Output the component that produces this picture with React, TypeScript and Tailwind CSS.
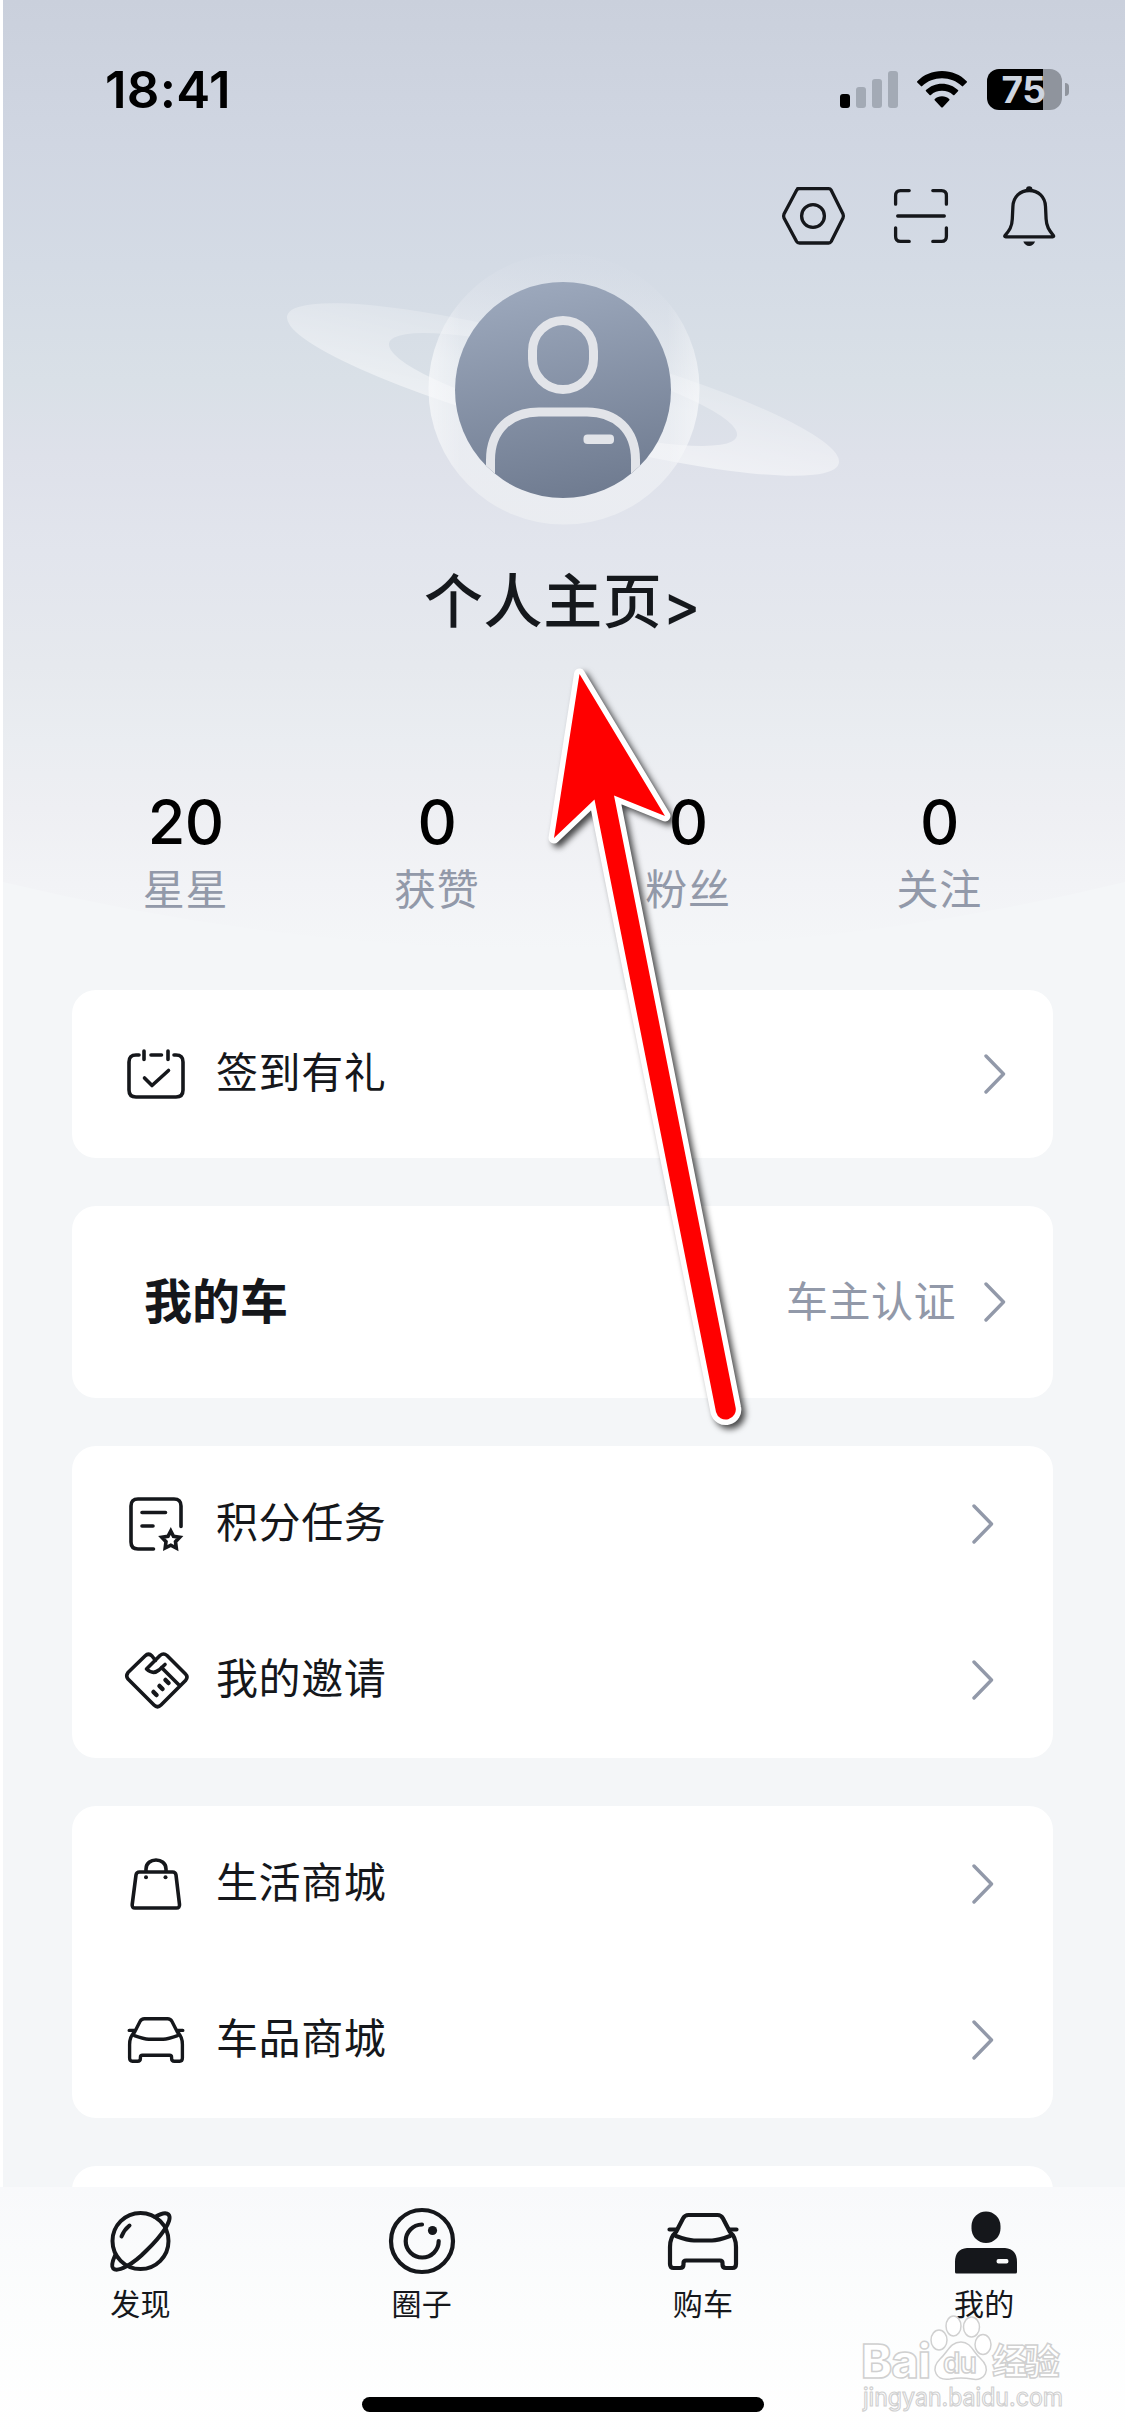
import type { ReactNode } from 'react';

const INK = '#15171b';
const MUTED = '#9299a9';

const stats = [
  { value: '20', label: '星星' },
  { value: '0', label: '获赞' },
  { value: '0', label: '粉丝' },
  { value: '0', label: '关注' },
];

function Icon({ w, h, sw = 3.3, children }: { w: number; h: number; sw?: number; children: ReactNode }) {
  return (
    <svg
      width={w}
      height={h}
      viewBox={`0 0 ${w} ${h}`}
      fill="none"
      stroke={INK}
      strokeWidth={sw}
      strokeLinecap="round"
      strokeLinejoin="round"
      className="shrink-0 overflow-visible"
    >
      {children}
    </svg>
  );
}

function Chevron() {
  return (
    <svg width="22" height="40" viewBox="0 0 22 40" fill="none" stroke={MUTED} strokeWidth="3.4" strokeLinecap="round" strokeLinejoin="round" className="shrink-0">
      <path d="M2 2 19.500 20 2 38" />
    </svg>
  );
}

function StatusBar() {
  return (
    <div className="flex h-[178px] items-center justify-between pl-[105px] pr-[56px]">
      <span className="text-[51px] font-semibold leading-none tracking-[0.3px] text-black">18:41</span>
      <div className="flex items-center">
        <svg width="58" height="37" viewBox="0 0 58 37" className="mr-[19px]">
          <rect x="0" y="23" width="10" height="14" rx="3" fill="#000" />
          <rect x="16" y="16" width="10" height="21" rx="3" fill="#a3aab5" />
          <rect x="32" y="8" width="10" height="29" rx="3" fill="#a3aab5" />
          <rect x="48" y="0" width="10" height="37" rx="3" fill="#a3aab5" />
        </svg>
        <svg width="50" height="37" viewBox="0 0 50 37" className="mr-[20px]">
          <path d="M25 0C15.500 0 6.600 3.700 0.300 10.200Q-0.300 10.900 0.300 11.500L3.900 15.100Q4.500 15.700 5.200 15.100C10.500 9.900 17.500 7.200 25 7.200S39.500 9.900 44.800 15.100Q45.500 15.700 46.100 15.100L49.700 11.500Q50.300 10.900 49.700 10.200C43.400 3.700 34.500 0 25 0Z" />
          <path d="M25 12.700C18.800 12.700 13.200 15.100 9 19Q8.300 19.700 9 20.300L12.600 23.900Q13.200 24.500 13.900 23.900C16.900 21.200 20.800 19.800 25 19.800S33.100 21.200 36.100 23.900Q36.800 24.500 37.400 23.900L41 20.300Q41.700 19.700 41 19C36.800 15.100 31.200 12.700 25 12.700Z" />
          <path d="M25 25.300C22.200 25.300 19.700 26.300 17.800 28Q17.100 28.700 17.700 29.300L24.200 36.200Q25 37 25.800 36.200L32.300 29.300Q32.900 28.700 32.200 28C30.300 26.300 27.800 25.300 25 25.300Z" />
        </svg>
        <div className="flex h-[41px] w-[75px] items-center justify-center rounded-[12px] bg-[linear-gradient(90deg,#000_56px,#8f949d_56px)]">
          <span className="-ml-[2px] text-[37px] font-bold leading-none tracking-[-0.5px] text-[#ced5e0]">75</span>
        </div>
        <div className="ml-[3px] h-[13px] w-[4px] rounded-r-full bg-[#8f949d]" />
      </div>
    </div>
  );
}

function TopActions() {
  return (
    <div className="flex h-[76px] items-center justify-end gap-[48px] pr-[67px]">
      <Icon w={64} h={60}>
        <path d="M16.500 2.700H47.700Q49.300 2.700 50.200 4.200L62 28Q62.800 30 62 32L50.200 55.500Q49.300 57 47.700 57H18.500Q16.500 57 15.600 55.500L3 32Q2.200 30 3 28L15.600 4.200Q16.500 2.700 18.500 2.700" />
        <circle cx="32" cy="30" r="11.400" />
      </Icon>
      <Icon w={56} h={56}>
        <path d="M16.200 2.600H7.500Q2.600 2.600 2.600 7.500V16.200M39.800 2.600H48.500Q53.400 2.600 53.400 7.500V16.200M2.600 39.800V48.500Q2.600 53.400 7.500 53.400H16.200M53.400 39.800V48.500Q53.400 53.400 48.500 53.400H39.800M4.700 28H51.300" />
      </Icon>
      <div className="ml-[5px]">
        <Icon w={56} h={62}>
          <path d="M27.200 5.500C18 5.500 11.300 12 10.900 21.500L10.300 34C10 42 7.300 45.500 3 50.600Q2.300 51.800 3.700 51.800H50.700Q52.100 51.800 51.400 50.600C47.500 45.500 44.500 42 44.100 34L43.500 21.500C43.100 12 36.400 5.500 27.200 5.500Z" />
          <path d="M25.600 4.500Q25.600 2.800 27.200 2.800T28.800 4.500" />
          <path d="M21.300 56.600H33.100Q31.200 61 27.200 61T21.300 56.600Z" fill={INK} stroke="none" />
        </Icon>
      </div>
    </div>
  );
}

function Avatar() {
  return (
    <svg width="560" height="274" viewBox="283 254 560 274" className="mx-auto block">
      <defs>
        <linearGradient id="ring" x1="0" y1="0" x2="0.250" y2="1">
          <stop offset="0.100" stopColor="#fff" stopOpacity="0.200" />
          <stop offset="1" stopColor="#fff" stopOpacity="0.500" />
        </linearGradient>
        <linearGradient id="halo" x1="0.650" y1="0" x2="0.450" y2="1">
          <stop offset="0.050" stopColor="#e6e8f0" stopOpacity="0.050" />
          <stop offset="0.500" stopColor="#f4f6f9" stopOpacity="0.550" />
          <stop offset="1" stopColor="#eef0f3" stopOpacity="0.700" />
        </linearGradient>
        {/* brighter rim on the left and right of the halo */}
        <linearGradient id="rim" x1="0" y1="0" x2="1" y2="0">
          <stop offset="0" stopColor="#fff" stopOpacity="0.350" />
          <stop offset="0.120" stopColor="#fff" stopOpacity="0" />
          <stop offset="0.880" stopColor="#fff" stopOpacity="0" />
          <stop offset="1" stopColor="#fff" stopOpacity="0.350" />
        </linearGradient>
        <linearGradient id="disc" x1="0.400" y1="0" x2="0.600" y2="1">
          <stop offset="0" stopColor="#9ca8bc" />
          <stop offset="1" stopColor="#6f7b90" />
        </linearGradient>
        <clipPath id="discClip">
          <circle cx="563" cy="390" r="108" />
        </clipPath>
      </defs>
      <path
        transform="translate(563 389.500) rotate(15)"
        fill="url(#ring)"
        fillRule="evenodd"
        d="M-285.500 0A285.500 46 0 0 1 285.500 0A285.500 46 0 0 1-285.500 0ZM-180 0A180 33 0 0 0 180 0A180 33 0 0 0-180 0Z"
      />
      <circle cx="564" cy="389" r="135.500" fill="url(#halo)" />
      <circle cx="564" cy="389" r="135.500" fill="url(#rim)" />
      <circle cx="563" cy="390" r="108" fill="url(#disc)" />
      <g fill="none" stroke="#e2e4e9" strokeWidth="9" clipPath="url(#discClip)">
        <rect x="532.500" y="320.500" width="61" height="69" rx="30.500" />
        <path d="M490.500 510V460C490.500 430 510 412 539 412H587C616 412 635.500 430 635.500 460V510" />
      </g>
      <rect x="583.500" y="434.500" width="30.500" height="9.500" rx="4" fill="#e2e4e9" />
    </svg>
  );
}

function Stats() {
  return (
    <div className="mt-[148px] flex px-[60px]">
      {stats.map((s) => (
        <div key={s.label} className="flex flex-1 flex-col items-center">
          <span className="text-[61px] font-medium leading-[60px] tracking-[-0.5px] text-black">{s.value}</span>
          <span className="mt-[10px] text-[42px] leading-[56px] tracking-[0.8px] text-[#9299a9]">{s.label}</span>
        </div>
      ))}
    </div>
  );
}

function Row({ icon, label, className = '' }: { icon: ReactNode; label: string; className?: string }) {
  return (
    <div className={`flex items-center pl-[48px] ${className}`}>
      <div className="flex w-[72px] justify-center">{icon}</div>
      <span className="ml-[24px] flex-1 pb-[2px] text-[42px] leading-none tracking-[0.6px] text-[#15171b]">{label}</span>
      <Chevron />
    </div>
  );
}

function CheckInIcon() {
  return (
    <Icon w={58} h={50} sw={3.6}>
      <path d="M12 6H9Q2 6 2 13V41Q2 48 9 48H49Q56 48 56 41V13Q56 6 49 6H47M24 6H34.500M17 2V10.500M41 2V10.500M17.500 29 25 36.500 41.500 21.500" />
    </Icon>
  );
}

function TaskIcon() {
  return (
    <Icon w={54} h={54} sw={3.6}>
      <path d="M52 29.500V9Q52 2 45 2H9Q2 2 2 9V45Q2 52 9 52H24.500M13 15.500H36.500M13 29H24" />
      <path d="M41.800 34 44.500 39.300 50.700 40.300 46.500 44.700 47.300 51 41.800 48.200 36.200 51 37 44.700 32.800 40.300 39 39.300Z" strokeLinejoin="miter" />
    </Icon>
  );
}

function InviteIcon() {
  return (
    <div className="ml-[2px]">
      <Icon w={64} h={57} sw={3.6}>
        <path d="M30.500 8.500 27 4Q23.500 0.500 20 4L3 20.500Q0.500 24 3 27L29 53Q32.500 56.500 36 53L60.500 28.500Q63.500 25 60.500 22L42 3.500Q38.500 0.500 35 3.500L21.500 17Q28 23 34 18L40 12.500M36.500 15.500 55 34" />
        <path d="M40.500 28 43.500 31M34.500 34 37.500 37M28.500 40 31.500 43" strokeWidth="4.500" />
      </Icon>
    </div>
  );
}

function BagIcon() {
  return (
    <Icon w={52} h={52} sw={3.6}>
      <path d="M9.500 14H42.500Q45.500 14 46 17L49.500 46.500Q49.800 50 46.500 50H5Q1.800 50 2.200 46.500L6 17Q6.500 14 9.500 14ZM16 13.500V11C16 -1 36 -1 36 11V13.500" />
      <circle cx="16" cy="19.300" r="2" fill={INK} stroke="none" />
      <circle cx="35.500" cy="19.300" r="2" fill={INK} stroke="none" />
    </Icon>
  );
}

function CarIcon({ w, h, sw }: { w: number; h: number; sw: number }) {
  return (
    <svg width={w} height={h} viewBox="0 0 70 57" fill="none" stroke={INK} strokeWidth={sw} strokeLinecap="round" strokeLinejoin="round" className="shrink-0 overflow-visible">
      <path d="M8 19 15 5.500Q16.800 2 20.500 2H49.500Q53.200 2 55 5.500L62 19Q68 24 68 34V51Q68 55 64.500 55H58Q54.500 55 54.500 51.500V50Q54.500 47.500 52 47.500H18Q15.500 47.500 15.500 50V51.500Q15.500 55 12 55H5.500Q2 55 2 51V34Q2 24 8 19Z" />
      <path d="M8 23Q20 27.500 26 27.500H44Q50 27.500 62 23M1.500 16.500H8M62 16.500H68.500" />
    </svg>
  );
}

function PlanetIcon() {
  return (
    <Icon w={61} h={60} sw={4}>
      <circle cx="30.500" cy="30" r="28" />
      <path d="M45 6Q55 0 58.500 3.500C63.500 9 50 26.500 37 39C22 54.500 7.500 61.500 3.200 57.500Q0.500 54.500 5 44.500M11.500 25.500Q14 19 19.500 14.500" />
    </Icon>
  );
}

function CircleIcon() {
  return (
    <Icon w={66} h={66} sw={4.2}>
      <circle cx="33" cy="33" r="31" />
      <path d="M33 16.500A16.500 16.500 0 1 0 49.700 33" />
      <circle cx="43.500" cy="22.500" r="4.600" fill={INK} stroke="none" />
    </Icon>
  );
}

function PersonIcon() {
  return (
    <svg width="62" height="63" viewBox="0 0 62 63" fill={INK} className="ml-[4px] mt-[2px]">
      <rect x="16.500" y="0.500" width="29" height="31.500" rx="14.500" />
      <path fillRule="evenodd" d="M12 37H50Q62 38 62 51V61Q62 62.500 60.500 62.500H1.500Q0 62.500 0 61V51Q0 38 12 37ZM43.500 48Q41.500 48 41.500 50.200T43.500 52.500H51.500Q53.500 52.500 53.500 50.200T51.500 48Z" />
    </svg>
  );
}

const tabs = [
  { label: '发现', icon: <PlanetIcon /> },
  { label: '圈子', icon: <CircleIcon /> },
  { label: '购车', icon: <CarIcon w={70} h={57} sw={4.2} /> },
  { label: '我的', icon: <PersonIcon /> },
];

function TabBar() {
  return (
    <nav className="relative h-[249px] shrink-0 bg-linear-to-b from-[#f8f9fb] via-[#fcfdfd] to-white">
      <div className="flex">
        {tabs.map((t) => (
          <div key={t.label} className="flex flex-1 flex-col items-center pt-[20px]">
            <div className="flex h-[68px] items-center">{t.icon}</div>
            <span className="mt-[9px] text-[30px] leading-[40px] tracking-[0.4px] text-[#15171b]">{t.label}</span>
          </div>
        ))}
      </div>
      <div className="mx-auto mt-[73px] h-[15px] w-[402px] rounded-full bg-black" />
      <Watermark />
    </nav>
  );
}

function Watermark() {
  return (
    <svg
      width="210"
      height="110"
      viewBox="860 2310 210 110"
      className="absolute left-[860px] top-[123px] overflow-visible"
      fill="#fff"
      stroke="#d0d0d0"
      strokeWidth="1.500"
      fontFamily='Inter, "Noto Sans CJK SC", sans-serif'
    >
      <text x="861" y="2378" fontSize="47" fontWeight="800" textLength="70">Bai</text>
      <ellipse cx="939" cy="2340" rx="8" ry="10" />
      <ellipse cx="953.500" cy="2326" rx="7.500" ry="10" />
      <ellipse cx="971.500" cy="2327" rx="8" ry="10" />
      <ellipse cx="983" cy="2344.500" rx="8" ry="10" />
      <path d="M961 2342C971 2342 973 2352 980 2358C992 2369 985 2382 972 2379Q961 2377 950 2379C936 2381 930 2369 940 2359C948 2352 950 2342 961 2342Z" />
      <text x="943" y="2373" fontSize="28" fontWeight="600" textLength="34">du</text>
      <text x="992" y="2375" fontSize="36" fontWeight="700" textLength="68">经验</text>
      <text x="863" y="2406" fontSize="25" textLength="200" lengthAdjust="spacingAndGlyphs" strokeWidth="1.200">jingyan.baidu.com</text>
    </svg>
  );
}

function Arrow() {
  return (
    <svg width="210" height="780" viewBox="540 660 210 780" className="pointer-events-none absolute left-[540px] top-[660px] drop-shadow-[4px_4px_3px_rgba(0,0,0,0.7)]">
      <path
        d="M579.500 674 665 816 614 795.500 735.500 1407A10 10 0 0 1 716 1412L594.500 799.500 554 838Z"
        fill="#f00"
        stroke="#fff"
        strokeWidth="11"
        strokeLinejoin="round"
        paintOrder="stroke"
      />
    </svg>
  );
}

export default function App() {
  return (
    <div className='relative flex h-[2436px] w-[1125px] flex-col overflow-hidden bg-white font-[Inter,"Noto_Sans_CJK_SC",sans-serif]'>
      <main className="relative flex-1 overflow-hidden border-l-[3px] border-white bg-[#f4f6f8]">
        {/* curved header backdrop */}
        <svg width="1122" height="950" viewBox="0 0 1122 950" className="absolute left-0 top-0">
          <defs>
            <linearGradient id="sky" x1="0" y1="0" x2="0" y2="1">
              <stop offset="0" stopColor="#cad0dc" />
              <stop offset="0.150" stopColor="#d0d6e2" />
              <stop offset="0.280" stopColor="#d4dbe5" />
              <stop offset="0.400" stopColor="#d9e0e7" />
              <stop offset="0.480" stopColor="#dee1ea" />
              <stop offset="0.580" stopColor="#e2e5ed" />
              <stop offset="0.700" stopColor="#e6e9ee" />
              <stop offset="0.780" stopColor="#eaedf1" />
              <stop offset="0.850" stopColor="#eeeff3" />
              <stop offset="0.930" stopColor="#f2f3f6" />
              <stop offset="1" stopColor="#f4f6f8" />
            </linearGradient>
          </defs>
          <path d="M0 0H1122V882Q561 1018 0 882Z" fill="url(#sky)" />
        </svg>

        <div className="relative -ml-[3px]">
          <StatusBar />
          <TopActions />
          <Avatar />
          <h1 className="mt-[32px] flex items-center justify-center text-[59px] font-medium leading-[84px] tracking-[0.6px] text-[#15181c]">
            个人主页
            <span className="pt-[4px] text-[57px] leading-none">&gt;</span>
          </h1>
          <Stats />

          <div className="mt-[72px] flex flex-col gap-[48px] px-[72px]">
            <section className="rounded-[24px] bg-white">
              <Row icon={<CheckInIcon />} label="签到有礼" className="h-[168px] pr-[47px]" />
            </section>

            <section className="flex h-[192px] items-center rounded-[24px] bg-white pl-[72px] pr-[47px]">
              <h2 className="flex-1 text-[48px] font-bold leading-none text-[#15171b]">我的车</h2>
              <span className="mr-[28px] text-[42px] leading-none tracking-[0.5px] text-[#9299a9]">车主认证</span>
              <Chevron />
            </section>

            <section className="rounded-[24px] bg-white">
              <Row icon={<TaskIcon />} label="积分任务" className="h-[156px] pr-[59px]" />
              <Row icon={<InviteIcon />} label="我的邀请" className="h-[156px] pr-[59px]" />
            </section>

            <section className="rounded-[24px] bg-white">
              <Row icon={<BagIcon />} label="生活商城" className="h-[156px] pr-[59px]" />
              <Row icon={<CarIcon w={56} h={46} sw={4.2} />} label="车品商城" className="h-[156px] pr-[59px]" />
            </section>

            <section className="h-[156px] rounded-[24px] bg-white" />
          </div>
        </div>
      </main>

      <TabBar />
      <Arrow />
    </div>
  );
}
